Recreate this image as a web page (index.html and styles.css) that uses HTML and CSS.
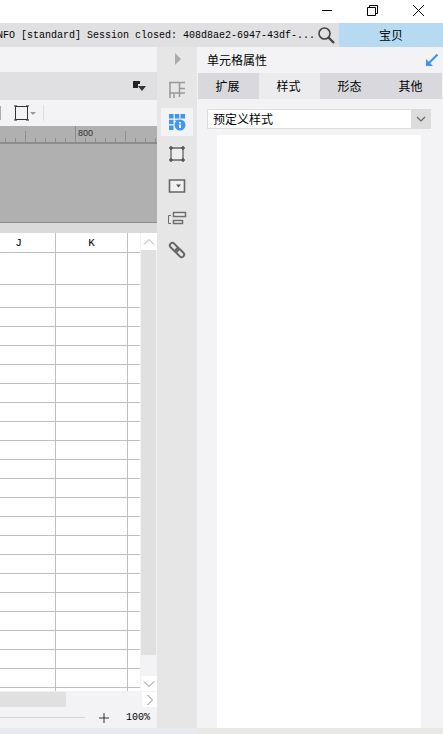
FILE: index.html
```html
<!DOCTYPE html>
<html lang="zh">
<head>
    <meta charset="UTF-8">
    <title>单元格属性</title>
    <link rel="stylesheet" href="styles.css">
</head>
<body>
    <div class="titlebar">
        <svg class="win-btn" width="46" height="23" viewBox="0 0 46 23"><path d="M17 10.500h10" stroke="#000" fill="none"/></svg>
        <svg class="win-btn" width="46" height="23" viewBox="0 0 46 23"><path d="M16.500 7.500h8v8h-8zM18.500 7.500v-2h8v8h-2" stroke="#000" fill="none"/></svg>
        <svg class="win-btn" width="46" height="23" viewBox="0 0 46 23"><path d="M16 5l11 11M27 5L16 16" stroke="#000" fill="none"/></svg>
    </div>
    <div class="statusbar">
        <div class="log">INFO [standard] Session closed: 408d8ae2-6947-43df-...</div>
        <svg class="search" width="17" height="17" viewBox="0 0 17 17"><circle cx="6.500" cy="6.500" r="5.500" fill="none" stroke="#444" stroke-width="1.600"/><path d="M10.500 10.500l5.500 5.500" stroke="#444" stroke-width="2.400"/></svg>
        <div class="user">宝贝</div>
    </div>
    <div class="main">
        <div class="editor">
            <div class="band-top"></div>
            <div class="band-format">
                <svg width="13" height="11" viewBox="0 0 13 11"><path d="M0 0h7v3H5v4H0z" fill="#222"/><path d="M5 5h8l-4 5z" fill="#333"/></svg>
            </div>
            <div class="toolbar">
                <span class="tool-cut"></span>
                <svg width="22" height="16" viewBox="0 0 22 16"><path d="M1.500 1.500h12v13h-12z" fill="none" stroke="#333"/><path d="M0 1h3M0 15h3M12 1h3M12 15h3" stroke="#222"/><path d="M16 7h6l-3 3z" fill="#999"/></svg>
                <span class="tool-sep"></span>
            </div>
            <div class="ruler">
                <svg width="157" height="16" viewBox="0 0 157 16"><path d="M5.500 12v4M15.500 12v4M35.500 12v4M45.500 12v4M55.500 12v4M65.500 12v4M85.500 12v4M95.500 12v4M105.500 12v4M115.500 12v4M135.500 12v4M145.500 12v4M155.500 12v4M25.500 5v11M125.500 5v11M75.500 0v16" stroke="#8e8e8e" fill="none"/><text x="78" y="10" class="ruler-num">800</text></svg>
            </div>
            <div class="gap-band"></div>
            <div class="sheet-wrap">
                <div class="sheet">
                    <div class="sheet-head"><div class="cell col-j">J</div><div class="cell col-k">K</div><div class="cell col-l"></div></div>
                    <div class="sheet-row r32"><div class="cell col-j"></div><div class="cell col-k"></div><div class="cell col-l"></div></div>
                    <div class="sheet-row r23"><div class="cell col-j"></div><div class="cell col-k"></div><div class="cell col-l"></div></div>
                    <div class="sheet-row"><div class="cell col-j"></div><div class="cell col-k"></div><div class="cell col-l"></div></div>
                    <div class="sheet-row"><div class="cell col-j"></div><div class="cell col-k"></div><div class="cell col-l"></div></div>
                    <div class="sheet-row"><div class="cell col-j"></div><div class="cell col-k"></div><div class="cell col-l"></div></div>
                    <div class="sheet-row"><div class="cell col-j"></div><div class="cell col-k"></div><div class="cell col-l"></div></div>
                    <div class="sheet-row"><div class="cell col-j"></div><div class="cell col-k"></div><div class="cell col-l"></div></div>
                    <div class="sheet-row"><div class="cell col-j"></div><div class="cell col-k"></div><div class="cell col-l"></div></div>
                    <div class="sheet-row"><div class="cell col-j"></div><div class="cell col-k"></div><div class="cell col-l"></div></div>
                    <div class="sheet-row"><div class="cell col-j"></div><div class="cell col-k"></div><div class="cell col-l"></div></div>
                    <div class="sheet-row"><div class="cell col-j"></div><div class="cell col-k"></div><div class="cell col-l"></div></div>
                    <div class="sheet-row"><div class="cell col-j"></div><div class="cell col-k"></div><div class="cell col-l"></div></div>
                    <div class="sheet-row"><div class="cell col-j"></div><div class="cell col-k"></div><div class="cell col-l"></div></div>
                    <div class="sheet-row"><div class="cell col-j"></div><div class="cell col-k"></div><div class="cell col-l"></div></div>
                    <div class="sheet-row"><div class="cell col-j"></div><div class="cell col-k"></div><div class="cell col-l"></div></div>
                    <div class="sheet-row"><div class="cell col-j"></div><div class="cell col-k"></div><div class="cell col-l"></div></div>
                    <div class="sheet-row"><div class="cell col-j"></div><div class="cell col-k"></div><div class="cell col-l"></div></div>
                    <div class="sheet-row"><div class="cell col-j"></div><div class="cell col-k"></div><div class="cell col-l"></div></div>
                    <div class="sheet-row"><div class="cell col-j"></div><div class="cell col-k"></div><div class="cell col-l"></div></div>
                    <div class="sheet-row"><div class="cell col-j"></div><div class="cell col-k"></div><div class="cell col-l"></div></div>
                    <div class="sheet-row"><div class="cell col-j"></div><div class="cell col-k"></div><div class="cell col-l"></div></div>
                    <div class="sheet-row"><div class="cell col-j"></div><div class="cell col-k"></div><div class="cell col-l"></div></div>
                    <div class="sheet-row last"><div class="cell col-j"></div><div class="cell col-k"></div><div class="cell col-l"></div></div>
                </div>
                <div class="vscroll">
                    <div class="scroll-btn up"><svg width="12" height="8" viewBox="0 0 12 8"><path d="M1 6.500l5-5 5 5" fill="none" stroke="#aaa"/></svg></div>
                    <div class="vtrack"></div>
                    <div class="scroll-btn down"><svg width="12" height="8" viewBox="0 0 12 8"><path d="M1 1.500l5 5 5-5" fill="none" stroke="#888"/></svg></div>
                </div>
            </div>
            <div class="hscroll">
                <div class="hthumb"></div>
                <div class="scroll-btn right"><svg width="8" height="12" viewBox="0 0 8 12"><path d="M1.500 1l5 5-5 5" fill="none" stroke="#888"/></svg></div>
            </div>
            <div class="zoombar">
                <div class="zoom-line"></div>
                <svg width="12" height="12" viewBox="0 0 12 12"><path d="M6 1v10M1 6h10" stroke="#333" fill="none"/></svg>
                <span class="zoom-num">100%</span>
            </div>
        </div>
        <div class="rail">
            <div class="rail-arrow"><svg width="6" height="12" viewBox="0 0 6 12"><path d="M0 0l6 6-6 6z" fill="#aaa"/></svg></div>
            <div class="rail-item first">
                <svg width="20" height="20" viewBox="0 0 20 20"><path d="M2 3.500h16M3 3v16M12.500 3v15M12 9.500h6M2 14h16M7 14v5" fill="none" stroke="#999" stroke-width="1.500"/></svg>
            </div>
            <div class="rail-item active">
                <svg width="18" height="18" viewBox="0 0 18 18"><path d="M1 1h4.500v4.500H1zM6.800 1h4.500v4.500H6.800zM12.500 1H17v4.500h-4.500zM1 6.800h4.500v4.500H1zM1 12.500h4.500V17H1z" fill="#3f97f2"/><path d="M6.800 6.800h4.500v1H6.800z" fill="#3f97f2"/><circle cx="12" cy="12" r="5.500" fill="#3f97f2"/><path d="M11 9h2v1.500h-2zM11 11.500h2V15h-2z" fill="#fff"/></svg>
            </div>
            <div class="rail-item">
                <svg width="18" height="18" viewBox="0 0 18 18"><path d="M3 3h12v12H3z" fill="#eee" stroke="#666" stroke-width="1.300"/><path d="M1 3h4M13 3h4M1 15h4M13 15h4M3 1v4M15 1v4M3 13v4M15 13v4" fill="none" stroke="#555" stroke-width="1.500"/></svg>
            </div>
            <div class="rail-item">
                <svg width="18" height="16" viewBox="0 0 18 16"><path d="M1.500 2h15v12h-15z" fill="#f0f0f0" stroke="#666" stroke-width="1.600"/><path d="M8 6.500h5l-2.500 3z" fill="#555"/></svg>
            </div>
            <div class="rail-item">
                <svg width="20" height="16" viewBox="0 0 20 16"><path d="M6.500 2.500h12v4h-12zM6.500 10.500h9v3h-9z" fill="#f0f0f0" stroke="#6e6e70" stroke-width="1.500"/><path d="M4 5.500H1.500v8H4" fill="none" stroke="#6e6e70"/></svg>
            </div>
            <div class="rail-item">
                <svg width="18" height="18" viewBox="0 0 18 18"><g transform="rotate(45 9 9)" fill="none" stroke="#666" stroke-width="2"><rect x="0" y="6.500" width="10" height="5" rx="2.500"/><rect x="8" y="6.500" width="10" height="5" rx="2.500"/></g></svg>
            </div>
        </div>
        <div class="panel">
            <div class="panel-head">
                <span class="panel-title">单元格属性</span>
                <svg width="12" height="12" viewBox="0 0 12 12"><path d="M11.500 0.500L3 9" stroke="#3f97f2" stroke-width="2.200" fill="none"/><path d="M0 5v7h7z" fill="#3f97f2"/></svg>
            </div>
            <div class="tabs">
                <div class="tab">扩展</div>
                <div class="tab active">样式</div>
                <div class="tab">形态</div>
                <div class="tab">其他</div>
            </div>
            <div class="select">
                <span class="select-text">预定义样式</span>
                <span class="select-btn"><svg width="10" height="6" viewBox="0 0 10 6"><path d="M1 1l4 4 4-4" fill="none" stroke="#666" stroke-width="1.200"/></svg></span>
            </div>
            <div class="style-list"></div>
        </div>
    </div>
    <div class="bottom"><div class="bottom-left"></div><div class="bottom-right"></div></div>
</body>
</html>
```
FILE: styles.css
```css
html, body {
    margin: 0;
    padding: 0;
}
body {
    width: 443px;
    height: 734px;
    overflow: hidden;
    background: #fff;
    color: #000;
    font-family: "Noto Sans CJK SC", "Liberation Sans", sans-serif;
    font-size: 12px;
}
svg {
    display: block;
}
.titlebar {
    height: 23px;
    display: flex;
    justify-content: flex-end;
    background: #fff;
}
.win-btn {
    flex: none;
}
.statusbar {
    height: 24px;
    display: flex;
    align-items: center;
    background: #e0e0e3;
}
.log {
    flex: 1;
    min-width: 0;
    margin-left: -9px;
    white-space: nowrap;
    font-family: "Liberation Mono", monospace;
    font-size: 10px;
}
.search {
    margin-right: 4px;
    flex: none;
}
.user {
    width: 104px;
    height: 24px;
    line-height: 24px;
    text-align: center;
    background: #b5daf2;
}
.main {
    height: 681px;
    display: flex;
}
.editor {
    width: 157px;
    display: flex;
    flex-direction: column;
    background: #f3f3f5;
}
.band-top {
    height: 25px;
}
.band-format {
    height: 28px;
    display: flex;
    align-items: center;
    justify-content: flex-end;
    padding-right: 11px;
    box-sizing: border-box;
    background: #e0e0e3;
}
.toolbar {
    height: 26px;
    display: flex;
    align-items: center;
}
.tool-cut {
    width: 1px;
    height: 14px;
    background: #aaa;
    margin-right: 13px;
}
.tool-sep {
    width: 1px;
    height: 16px;
    background: #ddd;
    margin-left: 7px;
}
.ruler {
    height: 97px;
    box-sizing: border-box;
    background: #b0b0b0;
    border-bottom: 1px solid #8c8c8c;
}
.ruler svg {
    height: 16px;
    box-sizing: content-box;
    border-bottom: 2px solid #8c8c8c;
}
.ruler-num {
    font-family: "Liberation Sans", sans-serif;
    font-size: 9px;
    fill: #333;
}
.gap-band {
    height: 10px;
    background: #dadada;
}
.sheet-wrap {
    height: 458px;
    display: flex;
}
.sheet {
    width: 140px;
    margin-right: 1px;
    overflow: hidden;
    background: #fff;
}
.sheet-head,
.sheet-row {
    display: flex;
    height: 19px;
    box-sizing: border-box;
    border-bottom: 1px solid #bfbfbf;
}
.sheet-head {
    height: 20px;
}
.r32 {
    height: 32px;
}
.r23 {
    height: 23px;
}
.last {
    height: 3px;
    border-bottom: 0;
}
.cell {
    box-sizing: border-box;
    border-right: 1px solid #bfbfbf;
}
.col-j {
    width: 56px;
}
.col-k {
    width: 72px;
}
.col-l {
    flex: 1;
    border-right: 0;
}
.sheet-head .cell {
    text-align: center;
    line-height: 21px;
    font-family: "Liberation Mono", monospace;
    font-size: 11px;
}
.sheet-head .col-j {
    padding-right: 18px;
}
.vscroll {
    width: 16px;
    display: flex;
    flex-direction: column;
}
.scroll-btn {
    display: flex;
    align-items: center;
    justify-content: center;
    background: #fff;
}
.up {
    height: 17px;
}
.down {
    height: 15px;
}
.vtrack {
    flex: 1;
    background: linear-gradient(#e0e0e0 405px, #f3f3f5 405px);
    margin-right: 1px;
}
.hscroll {
    height: 16px;
    display: flex;
    justify-content: space-between;
    padding-top: 1px;
    box-sizing: border-box;
}
.hthumb {
    width: 66px;
    background: #e0e0e0;
}
.right {
    width: 15px;
}
.zoombar {
    height: 21px;
    display: flex;
    align-items: center;
}
.zoom-line {
    width: 85px;
    height: 1px;
    background: #d4d4d4;
    margin-right: 13px;
}
.zoom-num {
    margin-left: 16px;
    font-family: "Liberation Mono", monospace;
    font-size: 10px;
}
.rail {
    width: 40px;
    display: flex;
    flex-direction: column;
    align-items: center;
    gap: 4px;
    background: #e6e6e6;
}
.rail-arrow {
    height: 24px;
    display: flex;
    align-items: center;
    padding-left: 2px;
}
.rail-item {
    width: 32px;
    height: 28px;
    display: flex;
    align-items: center;
    justify-content: center;
}
.rail-item.first {
    margin-bottom: 1px;
}
.rail-item.active {
    background: #f3f3f5;
}
.panel {
    width: 246px;
    display: flex;
    flex-direction: column;
    background: #f3f3f5;
}
.panel-head {
    height: 26px;
    display: flex;
    align-items: center;
    justify-content: space-between;
    padding: 0 5px 0 10px;
}
.panel-title {
    margin-bottom: 2px;
}
.tabs {
    height: 26px;
    display: flex;
    margin: 0 1px;
    background: #d9d9dd;
}
.tab {
    width: 61px;
    box-sizing: border-box;
    padding-right: 2px;
    line-height: 26px;
    text-align: center;
}
.tab.active {
    background: #ececee;
}
.select {
    height: 20px;
    margin: 10px 12px 0 10px;
    display: flex;
    box-sizing: border-box;
    background: #fff;
    border-top: 1px solid #dcdcdc;
    border-bottom: 1px solid #dcdcdc;
    border-left: 1px solid #dcdcdc;
}
.select-text {
    flex: 1;
    line-height: 18px;
    padding-left: 5px;
}
.select-btn {
    width: 20px;
    margin: -1px 0;
    display: flex;
    align-items: center;
    justify-content: center;
    background: #dcdcdc;
}
.style-list {
    flex: 1;
    margin: 6px 22px 0 20px;
    background: #fff;
}
.bottom {
    height: 6px;
    display: flex;
}
.bottom-left {
    width: 197px;
    background: #e6e9f0;
}
.bottom-right {
    flex: 1;
    background: #e8e8e4;
}
```
